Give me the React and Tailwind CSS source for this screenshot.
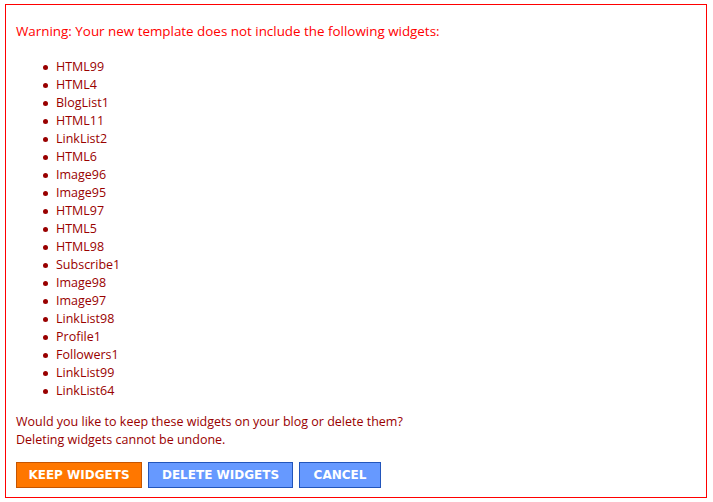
import React from 'react';

const widgets = [
  'HTML99', 'HTML4', 'BlogList1', 'HTML11', 'LinkList2', 'HTML6', 'Image96',
  'Image95', 'HTML97', 'HTML5', 'HTML98', 'Subscribe1', 'Image98', 'Image97',
  'LinkList98', 'Profile1', 'Followers1', 'LinkList99', 'LinkList64',
];

const App = () => {
  return (
    <div className="w-[713px] h-[502px] bg-white pt-[4px] pl-[5px]" style={{ fontFamily: '"Open Sans", sans-serif' }}>
      <div className="w-[702px] h-[494px] border border-[#ff0000] px-[10px] pt-[17px] text-[12.5px] leading-[18px]">
        <p className="text-[#ff0000] text-[13.4px]">Warning: Your new template does not include the following widgets:</p>

        <ul className="mt-[18px]">
          {widgets.map(w => (
            <li key={w} className="flex items-center text-[#990000]">
              <span className="ml-[27px] mr-[8px] w-[5px] h-[5px] rounded-full bg-[#990000]" />
              {w}
            </li>
          ))}
        </ul>

        <p className="mt-[13px] text-[#990000]">
          Would you like to keep these widgets on your blog or delete them?<br />
          Deleting widgets cannot be undone.
        </p>

        {/* Actions */}
        <div className="mt-[13px] flex gap-[6px] font-bold text-white text-[12px]" style={{ fontFamily: '"DejaVu Sans", sans-serif' }}>
          <button className="h-[26px] w-[126px] bg-[#ff7700] border border-[#c65500]">KEEP WIDGETS</button>
          <button className="h-[26px] w-[145px] bg-[#6699ff] border border-[#2255bb]">DELETE WIDGETS</button>
          <button className="h-[26px] w-[82px] bg-[#6699ff] border border-[#2255bb]">CANCEL</button>
        </div>
      </div>
    </div>
  );
};

export default App;
